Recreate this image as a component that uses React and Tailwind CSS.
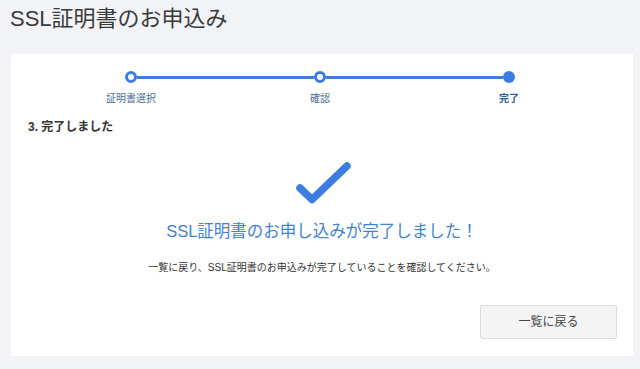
import React from 'react'

const font = { fontFamily: '"Liberation Sans", "Noto Sans CJK JP", sans-serif' }

const steps = [
  { label: '証明書選択', done: false },
  { label: '確認', done: false },
  { label: '完了', done: true },
]

function Stepper() {
  return (
    <div className="ml-[114px] w-[390px] grid grid-cols-[12px_1fr_12px_1fr_12px] items-center">
      {steps.map((s, i) => (
        <React.Fragment key={s.label}>
          {s.done ? (
            <div className="w-[12px] h-[12px] rounded-full bg-[#3b7de0]"></div>
          ) : (
            <div className="w-[12px] h-[12px] rounded-full border-[3px] border-[#3b7de0] bg-white"></div>
          )}
          {i < steps.length - 1 && <div className="h-[3px] bg-[#3b7de0]"></div>}
        </React.Fragment>
      ))}
      {steps.map((s, i) => (
        <React.Fragment key={'l' + s.label}>
          <div className="mt-[9px] w-[12px] flex justify-center">
            <span
              className={
                'whitespace-nowrap text-[10px] leading-[14px] ' +
                (s.done ? 'font-bold text-[#2f5f9e]' : 'text-[#4a6a90]')
              }
            >
              {s.label}
            </span>
          </div>
          {i < steps.length - 1 && <div></div>}
        </React.Fragment>
      ))}
    </div>
  )
}

export default function App() {
  return (
    <div className="min-h-[369px] bg-[#f1f3f6] px-[11px] pb-[13px] text-[#333]" style={font}>
      <h1 className="h-[54px] pt-[3px] text-[22px] leading-[32px] text-[#3a3a3a] -ml-[1px]">
        SSL証明書のお申込み
      </h1>
      <div className="w-[622px] h-[302px] bg-white pt-[17px] flex flex-col">
        <Stepper />
        <div className="mt-[13px] ml-[17px] text-[12px] leading-[17px] font-bold text-[#333]">
          3. 完了しました
        </div>
        <div className="mt-[24px] flex justify-center">
          <svg width="60" height="48" viewBox="0 0 60 48" className="ml-[3px]">
            <path
              d="M6 28 L18 39.5 L53 6"
              fill="none"
              stroke="#3b7de0"
              strokeWidth="7.5"
              strokeLinecap="round"
              strokeLinejoin="round"
            />
          </svg>
        </div>
        <div className="mt-[12px] text-center text-[16.5px] leading-[22px] text-[#3f82d6]">
          SSL証明書のお申し込みが完了しました！
        </div>
        <div className="mt-[19px] text-center text-[10px] leading-[14px] text-[#333]">
          一覧に戻り、SSL証明書のお申込みが完了していることを確認してください。
        </div>
        <div className="mt-auto mb-[17px] mr-[16px] flex justify-end">
          <button className="w-[137px] h-[34px] bg-[#f4f4f4] border border-[#dcdcdc] rounded-[2px] text-[12px] text-[#444]">
            一覧に戻る
          </button>
        </div>
      </div>
    </div>
  )
}
